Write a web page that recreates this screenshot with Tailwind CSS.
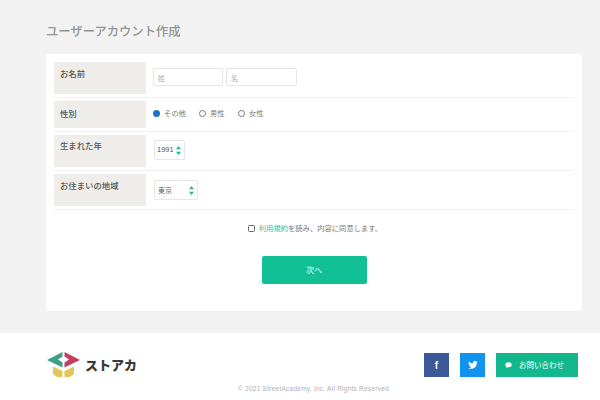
<!DOCTYPE html>
<html lang="ja">
  <head>
    <meta charset="UTF-8" />
    <title>ユーザーアカウント作成</title>
    <script src="https://cdn.jsdelivr.net/npm/@tailwindcss/browser@4"></script>
  </head>
  <body class="h-[400px] w-[600px] overflow-hidden bg-white font-['Noto_Sans_CJK_JP','Noto_Sans',sans-serif] text-[#555]">
    <!-- Form -->
    <main class="h-[333px] bg-[#f2f2f2] pl-[46px] pr-[18px] pt-[21px]">
      <h1 class="h-[33px] text-[12.3px] leading-[20px] font-medium text-[#949494]">ユーザーアカウント作成</h1>
      <div class="h-[257px] rounded-[3px] bg-white px-2 pt-2">
        <div class="flex h-[36px] border-b border-[#f0f0f0]">
          <div class="h-[32px] w-[92px] bg-[#efedea] pl-[6px] pt-[4px] text-[8.4px] leading-[14px] font-medium text-[#555]">お名前</div>
          <div class="flex gap-[3px] pl-[7px] pt-[6px]">
            <div class="h-[18px] w-[70px] rounded-[2px] border border-[#e6e6e6] pl-[4px] text-[7px] leading-[18px] text-[#aaa]">姓</div>
            <div class="h-[18px] w-[71px] rounded-[2px] border border-[#e6e6e6] pl-[4px] text-[7px] leading-[18px] text-[#aaa]">名</div>
          </div>
        </div>
        <div class="mt-[3px] flex h-[31px] border-b border-[#f0f0f0]">
          <div class="h-[27px] w-[92px] bg-[#efedea] pl-[6px] text-[8.4px] leading-[24px] font-medium text-[#555]">性別</div>
          <div class="flex items-center pb-[6px] pl-[7px] text-[7.3px] text-[#777]">
            <span class="h-[7px] w-[7px] rounded-full border-2 border-[#1a73c8] bg-[#1a73c8]"></span>
            <span class="ml-[4px] w-[22px]">その他</span>
            <span class="ml-[13px] h-[7px] w-[7px] rounded-full border border-[#777]"></span>
            <span class="ml-[4px] w-[15px]">男性</span>
            <span class="ml-[13px] h-[7px] w-[7px] rounded-full border border-[#777]"></span>
            <span class="ml-[4px]">女性</span>
          </div>
        </div>
        <div class="mt-[3px] flex h-[36px] border-b border-[#f0f0f0]">
          <div class="h-[32px] w-[92px] bg-[#efedea] pl-[6px] pt-[3px] text-[8.4px] leading-[14px] font-medium text-[#555]">生まれた年</div>
          <div class="pl-[8px] pt-[5px]">
            <div class="flex h-[20px] w-[31px] items-center justify-between rounded-[2px] border border-[#e6e6e6] pl-[2px] pr-[3px] font-['Liberation_Sans',sans-serif] text-[7.5px] text-[#555]">
              1991
              <svg width="5" height="11" viewBox="0 0 6 11"><path d="M3 0 6 4H0zM3 11 0 7h6z" fill="#2bb59b" /></svg>
            </div>
          </div>
        </div>
        <div class="mt-[3px] flex h-[36px] border-b border-[#f0f0f0]">
          <div class="h-[32px] w-[92px] bg-[#efedea] pl-[6px] pt-[4px] text-[8.4px] leading-[14px] font-medium text-[#555]">お住まいの地域</div>
          <div class="pl-[8px] pt-[6px]">
            <div class="flex h-[20px] w-[44px] items-center justify-between rounded-[2px] border border-[#e6e6e6] pl-[3px] pr-[3px] text-[7px] text-[#666]">
              東京
              <svg width="5" height="11" viewBox="0 0 6 11"><path d="M3 0 6 4H0zM3 11 0 7h6z" fill="#2bb59b" /></svg>
            </div>
          </div>
        </div>
        <div class="flex h-[37px] items-center justify-center pl-[2px] pb-[1px] text-[7.3px] text-[#777]">
          <span class="mr-[4px] h-[7px] w-[7px] rounded-[1.5px] border border-[#666]"></span>
          <a class="text-[#35bfa3]">利用規約</a>を読み、内容に同意します。
        </div>
        <button class="mx-auto mt-[9px] flex h-[28px] w-[105px] items-center justify-center rounded-[2px] bg-[#12c096] text-[8px] text-white">次へ</button>
      </div>
    </main>
    <!-- Footer -->
    <footer class="relative h-[67px]">
      <div class="flex items-start justify-between pl-[47px] pr-[22px] pt-[19px]">
        <div class="flex items-center">
          <svg width="33" height="25" viewBox="0 0 33 25">
            <path d="M15.500 0V4.500L11 7.500 15.500 10.500V15.500L0 8Z" fill="#3e9f88" />
            <path d="M17.500 0V4.500L22 7.500 17.500 10.500V15.500L33 8Z" fill="#c2405c" />
            <path d="M6 14.500 15.500 19V25H10L6 22Z" fill="#e3c65a" />
            <path d="M27 14.500 17.500 19V25H23L27 22Z" fill="#e3c65a" />
          </svg>
          <span class="ml-[5px] text-[13px] leading-[24px] font-black text-[#3a3a3a]">ストアカ</span>
        </div>
        <div class="mt-px flex">
          <div class="flex h-[24px] w-[25px] items-center justify-center bg-[#3b5998] font-['Liberation_Sans',sans-serif] text-[10px] font-bold text-white">f</div>
          <div class="ml-[11px] flex h-[24px] w-[25px] items-center justify-center bg-[#1193f0]">
            <svg width="10" height="8" viewBox="0 0 24 20"><path d="M24 2.400a10 10 0 0 1-2.800.8A5 5 0 0 0 23.300.5a10 10 0 0 1-3.100 1.200 4.900 4.900 0 0 0-8.400 4.500A14 14 0 0 1 1.700 1a4.900 4.900 0 0 0 1.500 6.600 5 5 0 0 1-2.200-.6 4.900 4.900 0 0 0 3.900 4.900 5 5 0 0 1-2.200.1 4.900 4.900 0 0 0 4.600 3.400A10 10 0 0 1 0 17.400 14 14 0 0 0 7.500 19.600c9.100 0 14.300-7.700 14-14.600A10 10 0 0 0 24 2.400z" fill="#fff" /></svg>
          </div>
          <div class="ml-[11px] flex h-[24px] w-[82px] items-center bg-[#12b88c] pl-[9px] text-[7.5px] text-white">
            <svg width="7" height="6" viewBox="0 0 7 6"><ellipse cx="3.500" cy="2.700" rx="3.200" ry="2.500" fill="#fff" /><path d="M1.500 4 1 6 3.500 5z" fill="#fff" /></svg>
            <span class="ml-[7px]">お問い合わせ</span>
          </div>
        </div>
      </div>
      <p class="absolute bottom-[6px] left-0 w-full pl-[29px] text-center font-['Liberation_Sans',sans-serif] text-[6.5px] leading-[10px] tracking-[0.25px] text-[#b0b0b0]">© 2021 StreetAcademy, Inc. All Rights Reserved.</p>
    </footer>
  </body>
</html>
